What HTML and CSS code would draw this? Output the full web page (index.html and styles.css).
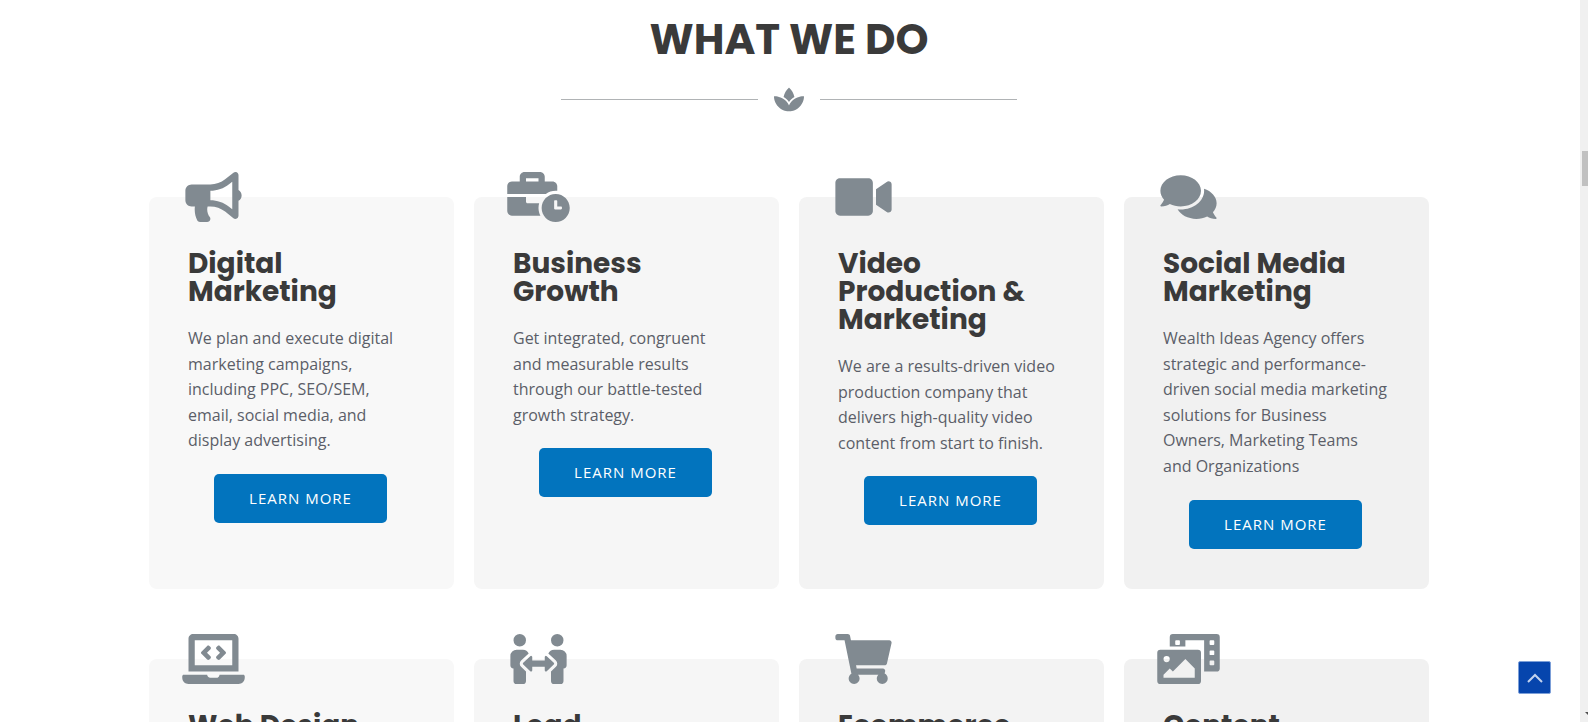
FILE: index.html
```html
<!DOCTYPE html>
<html lang="en">
<head>
    <meta charset="UTF-8">
    <meta name="viewport" content="width=device-width, initial-scale=1.0">
    <title>What We Do</title>
    <link rel="stylesheet" href="styles.css">
</head>
<body>
    <main class="page">
        <section class="services">
            <h2 class="section-title">WHAT WE DO</h2>
            <div class="divider">
                <svg class="divider-icon" viewBox="0 0 576 512" aria-hidden="true"><path d="M568.25 192c-29.04.13-135.01 6.16-213.84 83-33.12 29.63-53.36 63.3-66.41 94.86-13.05-31.56-33.29-65.23-66.41-94.86-78.83-76.84-184.8-82.87-213.84-83-4.41-.02-7.79 3.4-7.75 7.82.23 27.92 7.14 126.14 88.77 199.3C172.79 480.94 256 480 288 480s115.19.95 199.23-80.88c81.64-73.17 88.54-171.38 88.77-199.3.04-4.42-3.34-7.84-7.75-7.82zM287.98 302.6c12.82-18.85 27.6-35.78 44.09-50.52 19.09-18.61 39.58-33.3 60.26-45.18-16.44-70.5-51.72-133.05-96.73-172.22-4.11-3.58-11.02-3.58-15.14 0-44.99 39.14-80.27 101.63-96.74 172.07 20.37 11.7 40.5 26.14 59.22 44.39a282.768 282.768 0 0 1 45.04 51.46z"/></svg>
            </div>

            <div class="card-grid">
                <article class="card">
                    <svg class="card-icon" viewBox="0 0 576 512" aria-hidden="true"><path d="M576 240c0-23.63-12.95-44.04-32-55.12V32.01C544 23.26 537.02 0 512 0c-7.12 0-14.19 2.38-19.98 7.02l-85.03 68.03C364.28 109.19 310.66 128 256 128H64c-35.35 0-64 28.65-64 64v96c0 35.35 28.65 64 64 64h33.7c-1.39 10.48-2.18 21.14-2.18 32 0 39.77 9.26 77.35 25.56 110.94 5.19 10.69 16.52 17.06 28.4 17.06h74.28c26.05 0 41.69-29.84 25.9-50.56-16.4-21.52-26.15-48.36-26.15-77.44 0-11.11 1.62-21.79 4.41-32H256c54.66 0 108.28 18.81 150.98 52.95l85.03 68.03a32.023 32.023 0 0 0 19.98 7.02c24.92 0 32-22.78 32-32V295.13C563.05 284.04 576 263.63 576 240zm-96 141.42l-33.05-26.44C392.95 311.78 325.12 288 256 288v-96c69.12 0 136.95-23.78 190.95-66.98L480 98.58v282.84z"/></svg>
                    <h3 class="card-title">Digital Marketing</h3>
                    <p class="card-text">We plan and execute digital marketing campaigns, including PPC, SEO/SEM, email, social media, and display advertising.</p>
                    <a class="button" href="#">LEARN MORE</a>
                </article>

                <article class="card">
                    <svg class="card-icon" viewBox="0 0 640 512" aria-hidden="true"><path d="M496 224c-79.59 0-144 64.41-144 144s64.41 144 144 144 144-64.41 144-144-64.41-144-144-144zm64 150.29c0 5.34-4.37 9.71-9.71 9.71h-60.57c-5.34 0-9.71-4.37-9.71-9.71v-76.57c0-5.34 4.37-9.71 9.71-9.71h12.57c5.34 0 9.71 4.37 9.71 9.71V352h38.29c5.34 0 9.71 4.37 9.71 9.71v12.58zM496 192c5.4 0 10.72.33 16 .81V144c0-25.6-22.4-48-48-48h-80V48c0-25.6-22.4-48-48-48H176c-25.6 0-48 22.4-48 48v48H48c-25.6 0-48 22.4-48 48v80h395.12c28.6-20.09 63.35-32 100.88-32zM320 96H192V64h128v32zm6.82 224H208c-8.84 0-16-7.16-16-16v-48H0v144c0 25.6 22.4 48 48 48h291.43C327.1 423.96 320 396.82 320 368c0-16.66 2.48-32.72 6.82-48z"/></svg>
                    <h3 class="card-title">Business Growth</h3>
                    <p class="card-text">Get integrated, congruent and measurable results through our battle-tested growth strategy.</p>
                    <a class="button" href="#">LEARN MORE</a>
                </article>

                <article class="card">
                    <svg class="card-icon" viewBox="0 0 576 512" aria-hidden="true"><path d="M336.2 64H47.8C21.4 64 0 85.4 0 111.8v288.4C0 426.6 21.4 448 47.8 448h288.4c26.4 0 47.8-21.4 47.8-47.8V111.8c0-26.4-21.4-47.8-47.8-47.8zm189.4 37.7L416 177.3v157.4l109.6 75.5c21.2 14.6 50.4-.3 50.4-25.8V127.5c0-25.4-29.1-40.4-50.4-25.8z"/></svg>
                    <h3 class="card-title">Video Production &amp; Marketing</h3>
                    <p class="card-text">We are a results-driven video production company that delivers high-quality video content from start to finish.</p>
                    <a class="button" href="#">LEARN MORE</a>
                </article>

                <article class="card">
                    <svg class="card-icon" viewBox="0 0 576 512" aria-hidden="true"><path d="M416 192c0-88.4-93.1-160-208-160S0 103.6 0 192c0 34.3 14.1 65.9 38 92-13.4 30.2-35.5 54.2-35.8 54.5-2.2 2.3-2.8 5.7-1.5 8.7S4.8 352 8 352c36.6 0 66.9-12.3 88.7-25 32.2 15.7 70.3 25 111.3 25 114.9 0 208-71.6 208-160zm122 220c23.9-26 38-57.7 38-92 0-66.9-53.5-124.2-129.3-148.1.9 6.6 1.3 13.3 1.3 20.1 0 105.9-107.7 192-240 192-10.8 0-21.3-.8-31.7-1.9C207.8 439.6 281.8 480 368 480c41 0 79.1-9.2 111.3-25 21.8 12.7 52.1 25 88.7 25 3.2 0 6.1-1.9 7.3-4.8 1.3-2.9.7-6.3-1.5-8.7-.3-.3-22.4-24.2-35.8-54.5z"/></svg>
                    <h3 class="card-title">Social Media Marketing</h3>
                    <p class="card-text">Wealth Ideas Agency offers strategic and performance-driven social media marketing solutions for Business Owners, Marketing Teams and Organizations</p>
                    <a class="button" href="#">LEARN MORE</a>
                </article>

                <article class="card">
                    <svg class="card-icon" viewBox="0 0 640 512" aria-hidden="true"><path d="M255.03 261.65c6.25 6.25 16.38 6.25 22.63 0l11.31-11.31c6.25-6.25 6.25-16.38 0-22.63L253.25 192l35.71-35.72c6.25-6.25 6.25-16.38 0-22.63l-11.31-11.31c-6.25-6.25-16.38-6.25-22.63 0l-58.34 58.34c-6.25 6.25-6.25 16.38 0 22.63l58.35 58.34zm96.01-11.3l11.31 11.31c6.25 6.25 16.38 6.25 22.63 0l58.34-58.34c6.25-6.25 6.25-16.38 0-22.63l-58.34-58.34c-6.25-6.25-16.38-6.25-22.63 0l-11.31 11.31c-6.25 6.25-6.25 16.38 0 22.63L386.75 192l-35.71 35.72c-6.25 6.25-6.25 16.38 0 22.63zM624 416H381.54c-.74 19.81-14.71 32-32.74 32H288c-18.69 0-33.02-17.47-32.77-32H16c-8.8 0-16 7.2-16 16v16c0 35.2 28.8 64 64 64h512c35.2 0 64-28.8 64-64v-16c0-8.8-7.2-16-16-16zM576 48c0-26.4-21.6-48-48-48H112C85.6 0 64 21.6 64 48v336h512V48zm-64 272H128V64h384v256z"/></svg>
                    <h3 class="card-title">Web Design</h3>
                </article>

                <article class="card">
                    <svg class="card-icon" viewBox="0 0 576 512" aria-hidden="true"><path d="M96,128A64,64,0,1,0,32,64,64,64,0,0,0,96,128Zm0,176.08a44.11,44.11,0,0,1,13.64-32L181.77,204c1.65-1.55,3.77-2.31,5.61-3.57A63.91,63.91,0,0,0,128,160H64A64,64,0,0,0,0,224v96a32,32,0,0,0,32,32V480a32,32,0,0,0,32,32h64a32,32,0,0,0,32-32V383.61l-50.36-47.53A44.08,44.08,0,0,1,96,304.08ZM480,128a64,64,0,1,0-64-64A64,64,0,0,0,480,128Zm32,32H448a63.91,63.91,0,0,0-59.38,40.42c1.84,1.27,4,2,5.62,3.59l72.12,68.06a44.37,44.37,0,0,1,0,64L416,383.62V480a32,32,0,0,0,32,32h64a32,32,0,0,0,32-32V352a32,32,0,0,0,32-32V224A64,64,0,0,0,512,160ZM444.4,295.34l-72.12-68.06A12,12,0,0,0,352,236v36H224V236a12,12,0,0,0-20.28-8.73L131.6,295.34a12.4,12.4,0,0,0,0,17.47l72.12,68.07A12,12,0,0,0,224,372.14V336H352v36.14a12,12,0,0,0,20.28,8.74l72.12-68.07A12.4,12.4,0,0,0,444.4,295.34Z"/></svg>
                    <h3 class="card-title">Lead</h3>
                </article>

                <article class="card">
                    <svg class="card-icon" viewBox="0 0 576 512" aria-hidden="true"><path d="M528.12 301.319l47.273-208C578.806 78.301 567.391 64 551.99 64H159.208l-9.166-44.81C147.758 8.021 137.93 0 126.529 0H24C10.745 0 0 10.745 0 24v16c0 13.255 10.745 24 24 24h69.883l70.248 343.435C147.325 417.1 136 435.222 136 456c0 30.928 25.072 56 56 56s56-25.072 56-56c0-15.674-6.447-29.835-16.824-40h209.647C430.447 426.165 424 440.326 424 456c0 30.928 25.072 56 56 56s56-25.072 56-56c0-22.172-12.888-41.332-31.579-50.405l5.517-24.276c3.413-15.018-8.002-29.319-23.403-29.319H218.117l-6.545-32h293.145c11.206 0 20.92-7.754 23.403-18.681z"/></svg>
                    <h3 class="card-title">Ecommerce</h3>
                </article>

                <article class="card">
                    <svg class="card-icon" viewBox="0 0 640 512" aria-hidden="true"><path d="M608 0H160a32 32 0 0 0-32 32v96h160V64h192v320h128a32 32 0 0 0 32-32V32a32 32 0 0 0-32-32zM232 103a9 9 0 0 1-9 9h-30a9 9 0 0 1-9-9V73a9 9 0 0 1 9-9h30a9 9 0 0 1 9 9zm352 208a9 9 0 0 1-9 9h-30a9 9 0 0 1-9-9v-30a9 9 0 0 1 9-9h30a9 9 0 0 1 9 9zm0-104a9 9 0 0 1-9 9h-30a9 9 0 0 1-9-9v-30a9 9 0 0 1 9-9h30a9 9 0 0 1 9 9zm0-104a9 9 0 0 1-9 9h-30a9 9 0 0 1-9-9V73a9 9 0 0 1 9-9h30a9 9 0 0 1 9 9zm-168 57H32a32 32 0 0 0-32 32v288a32 32 0 0 0 32 32h384a32 32 0 0 0 32-32V192a32 32 0 0 0-32-32zM96 224a32 32 0 1 1-32 32 32 32 0 0 1 32-32zm288 224H64v-32l64-64 32 32 128-128 96 96z"/></svg>
                    <h3 class="card-title">Content</h3>
                </article>
            </div>
        </section>
    </main>

    <button class="scroll-top" type="button" aria-label="Scroll to top">
        <svg class="scroll-top-icon" viewBox="0 0 16 10" aria-hidden="true"><path d="M1 9l7-7 7 7"/></svg>
    </button>

    <div class="scrollbar" aria-hidden="true">
        <div class="scrollbar-thumb"></div>
        <svg class="scrollbar-arrow" viewBox="0 0 6 6"><path d="M0 0h6v6z"/></svg>
    </div>

    <script>
        document.querySelector('.scroll-top').addEventListener('click', () => {
            document.querySelector('.page').scrollTo({ top: 0, behavior: 'smooth' });
        });
    </script>
</body>
</html>
```
FILE: styles.css
```css
* {
    box-sizing: border-box;
}

body {
    margin: 0;
    height: 100vh;
    display: flex;
    overflow: hidden;
    background: #fff;
    color: #5b5e68;
    font-family: "Open Sans", sans-serif;
    font-size: 16px;
    line-height: 1.6;
}

.page {
    flex: 1;
    overflow: hidden;
}

.services {
    max-width: 1320px;
    margin: 0 auto;
    padding: 19px 20px 40px;
}

.section-title {
    margin: 0;
    color: #3a3a3a;
    font-family: Poppins, Inter, sans-serif;
    font-size: 42px;
    font-weight: 700;
    line-height: 42px;
    text-align: center;
}

.divider {
    display: flex;
    align-items: center;
    gap: 16px;
    max-width: 456px;
    margin: 25px auto 0;
}

.divider::before,
.divider::after {
    content: "";
    flex: 1;
    border-top: 1px solid #b0b3b5;
}

.divider-icon {
    width: 30px;
    height: 27px;
    fill: #818a91;
}

.card-grid {
    display: grid;
    grid-template-columns: repeat(4, 1fr);
    gap: 70px 20px;
    margin-top: 84px;
}

.card {
    position: relative;
    display: flex;
    flex-direction: column;
    align-items: flex-start;
    padding: 53px 41px 40px 39px;
    border-radius: 8px;
    background: #f8f8f8;
}

.card:nth-child(4n + 2) {
    background: #f6f6f6;
}

.card:nth-child(4n + 3) {
    background: #f3f3f3;
}

.card:nth-child(4n + 4) {
    background: #f1f1f1;
}

/* icon straddles the top edge of the card */
.card-icon {
    position: absolute;
    top: -25px;
    left: 33px;
    width: 63px;
    height: 50px;
    fill: #818a91;
}

.card-title {
    margin: 0 0 20px;
    color: #3a3a3a;
    font-family: Poppins, Inter, sans-serif;
    font-size: 28px;
    font-weight: 700;
    line-height: 28px;
}

.card-text {
    margin: 0 0 20px;
}

.button {
    align-self: center;
    padding: 12px 35px;
    border-radius: 5px;
    background: #0274be;
    color: #fff;
    font-size: 15px;
    line-height: 25px;
    letter-spacing: 1px;
    text-decoration: none;
}

.button:hover {
    background: #3a3a3a;
}

.scroll-top {
    position: fixed;
    right: 37px;
    bottom: 28px;
    display: flex;
    align-items: center;
    justify-content: center;
    width: 33px;
    height: 33px;
    padding: 0;
    border: 1px solid #7c9fd8;
    border-radius: 2px;
    background: #0645ad;
    cursor: pointer;
}

.scroll-top-icon {
    width: 16px;
    height: 10px;
    fill: none;
    stroke: #c3d3ee;
    stroke-width: 2;
}

.scrollbar {
    display: flex;
    flex-direction: column;
    justify-content: space-between;
    align-items: flex-end;
    width: 10px;
    padding: 151px 0 7px;
    border-left: 2px solid #fff;
    background: #f0f0f0;
}

.scrollbar-thumb {
    width: 6px;
    height: 35px;
    background: #c1c1c1;
}

.scrollbar-arrow {
    width: 3px;
    height: 3px;
    fill: #505050;
}
```
